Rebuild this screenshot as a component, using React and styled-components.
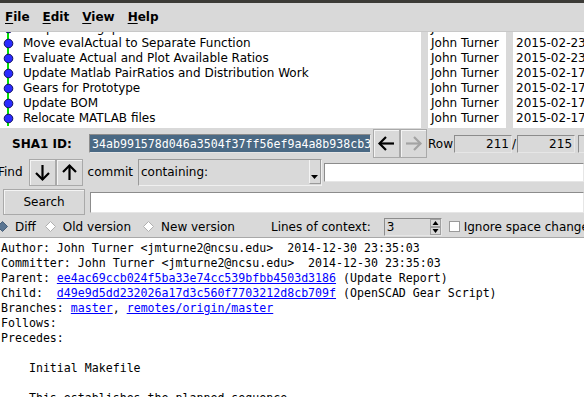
import styled, { createGlobalStyle } from "styled-components";

const GlobalStyle = createGlobalStyle`
  html, body {
    margin: 0;
    padding: 0;
    background: #d9d9d9;
    overflow: hidden;
  }
  body {
    font-family: "DejaVu Sans", sans-serif;
    font-size: 12px;
    color: #000;
  }
`;

const Window = styled.div`
  width: 584px;
  height: 397px;
  display: flex;
  flex-direction: column;
  overflow: hidden;
  background: #d9d9d9;
`;

const TopStrip = styled.div`
  flex: none;
  height: 3px;
  background: #3c3b37;
`;

const MenuBar = styled.div`
  flex: none;
  height: 28px;
  display: flex;
  align-items: center;
  gap: 13px;
  padding-left: 5px;
  font-weight: bold;
  border-bottom: 1px solid #c8c8c8;

  u {
    text-decoration-thickness: 1px;
    text-underline-offset: 2px;
  }
`;

const Panes = styled.div`
  flex: none;
  height: 96px;
  display: flex;
  gap: 7px;
`;

const Pane = styled.div`
  flex: ${(p) => (p.$w ? "none" : "1")};
  width: ${(p) => (p.$w ? `${p.$w}px` : "auto")};
  background: #fff;
  overflow: hidden;
`;

const Rows = styled.div`
  margin-top: -11px;
`;

const Row = styled.div`
  height: 15px;
  line-height: 15px;
  display: flex;
  align-items: center;
  white-space: nowrap;
  padding-left: ${(p) => p.$pad || 0}px;
`;

const Graph = styled.svg`
  flex: none;
  width: 23px;
  height: 15px;
`;

const ToolRow = styled.div`
  flex: none;
  height: ${(p) => p.$h}px;
  margin-top: ${(p) => p.$mt || 0}px;
  display: flex;
  align-items: center;
  white-space: nowrap;
`;

const Label = styled.span`
  flex: none;
  font-weight: ${(p) => (p.$bold ? "bold" : "normal")};
  margin-left: ${(p) => p.$ml || 0}px;
  width: ${(p) => (p.$w ? `${p.$w}px` : "auto")};
`;

const Entry = styled.div`
  flex: ${(p) => (p.$grow ? "1" : "none")};
  box-sizing: border-box;
  width: ${(p) => (p.$w ? `${p.$w}px` : "auto")};
  height: ${(p) => p.$h || 19}px;
  margin-left: ${(p) => p.$ml || 0}px;
  border: 1px solid;
  border-color: #8c8c8c #e6e6e6 #e6e6e6 #8c8c8c;
  background: ${(p) => (p.$sel ? "#4a6984" : p.$ro ? "#d9d9d9" : "#fff")};
  color: ${(p) => (p.$sel ? "#fff" : "#000")};
  font-family: ${(p) => (p.$mono ? '"DejaVu Sans Mono", monospace' : "inherit")};
  font-size: ${(p) => (p.$mono ? "11.6px" : "12px")};
  display: flex;
  align-items: center;
  justify-content: ${(p) => (p.$right ? "flex-end" : "flex-start")};
  padding: 0 2px;
  overflow: hidden;
  white-space: nowrap;
`;

const ArrowButton = styled.div`
  flex: none;
  box-sizing: border-box;
  width: 27px;
  height: ${(p) => p.$h || 29}px;
  margin-left: ${(p) => p.$ml || 0}px;
  border: 1px solid #a9a9a9;
  box-shadow: inset 1px 1px 0 #f4f4f4;
  display: flex;
  align-items: center;
  justify-content: center;
  color: ${(p) => (p.$disabled ? "#a3a3a3" : "#000")};
`;

const Button = styled.div`
  flex: none;
  box-sizing: border-box;
  width: 82px;
  height: 26px;
  margin-left: 3px;
  border: 1px solid #a9a9a9;
  box-shadow: inset 1px 1px 0 #f4f4f4;
  display: flex;
  align-items: center;
  justify-content: center;
`;

const Combo = styled.div`
  flex: none;
  box-sizing: border-box;
  width: 184px;
  height: 27px;
  margin-left: 5px;
  border: 1px solid;
  border-color: #9a9a9a #f0f0f0 #f0f0f0 #9a9a9a;
  display: flex;
  align-items: center;
  padding-left: 2px;
  position: relative;
`;

const ComboButton = styled.div`
  position: absolute;
  right: 0;
  top: 0;
  bottom: 1px;
  width: 12px;
  box-sizing: border-box;
  border-left: 1px solid #f4f4f4;
  border-right: 1px solid #9a9a9a;
  border-bottom: 1px solid #9a9a9a;
  display: flex;
  align-items: flex-end;
  justify-content: center;
  padding-bottom: 4px;
`;

const Radio = styled.span`
  flex: none;
  display: flex;
  align-items: center;
  margin-left: ${(p) => p.$ml || 0}px;

  svg {
    margin-right: ${(p) => p.$gap || 7}px;
  }
`;

const Spin = styled.div`
  flex: none;
  box-sizing: border-box;
  width: 58px;
  height: 18px;
  margin-left: 13px;
  border: 1px solid;
  border-color: #8c8c8c #e6e6e6 #e6e6e6 #8c8c8c;
  display: flex;
  align-items: center;
  padding-left: 2px;
  position: relative;
`;

const SpinArrows = styled.svg`
  position: absolute;
  right: 0;
  top: 0;
`;

const CheckBox = styled.span`
  flex: none;
  box-sizing: border-box;
  width: 11px;
  height: 11px;
  margin: 0 4px 0 7px;
  border: 1px solid #9a9a9a;
  background: #fff;
`;

const TextPane = styled.div`
  flex: 1;
  background: #fff;
  border-top: 1px solid #a8a8a8;
  padding: 3px 0 0 1px;
  font-family: "DejaVu Sans Mono", monospace;
  font-size: 11.6px;
  line-height: 15px;
  white-space: pre;
  overflow: hidden;

  a {
    color: #0000ff;
    text-decoration: underline;
  }
`;

const commits = [
  { msg: "Adapt Ratio gap", date: "2015-02-23 18:02" },
  { msg: "Move evalActual to Separate Function", date: "2015-02-23 17:41" },
  { msg: "Evaluate Actual and Plot Available Ratios", date: "2015-02-23 12:10" },
  { msg: "Update Matlab PairRatios and Distribution Work", date: "2015-02-17 21:33" },
  { msg: "Gears for Prototype", date: "2015-02-17 20:05" },
  { msg: "Update BOM", date: "2015-02-17 19:48" },
  { msg: "Relocate MATLAB files", date: "2015-02-17 19:20" },
];

function Node() {
  return (
    <Graph viewBox="0 0 23 15">
      <rect x="7" y="0" width="2" height="15" fill="#00e000" />
      <circle cx="8.5" cy="7.5" r="4.3" fill="#2b2bff" stroke="#10105a" strokeWidth="1" />
    </Graph>
  );
}

function Arrow({ dir }) {
  const rot = { left: 0, right: 180, up: 90, down: 270 }[dir];
  return (
    <svg width="19" height="19" viewBox="0 0 19 19">
      <g transform={`rotate(${rot} 9.5 9.5)`} fill="none" stroke="currentColor" strokeWidth="2.2">
        <path d="M2.5 9.5 H17" />
        <path d="M9 3 L2.5 9.5 L9 16" />
      </g>
    </svg>
  );
}

function Diamond({ on }) {
  return (
    <svg width="11" height="11" viewBox="0 0 11 11">
      <polygon
        points="5.5,0.5 10.5,5.5 5.5,10.5 0.5,5.5"
        fill={on ? "#5a7592" : "#fff"}
        stroke={on ? "#4a6078" : "#b0b0b0"}
        strokeWidth="1"
      />
    </svg>
  );
}

export default function App() {
  return (
    <Window>
      <GlobalStyle />
      <TopStrip />
      <MenuBar>
        <span><u>F</u>ile</span>
        <span><u>E</u>dit</span>
        <span><u>V</u>iew</span>
        <span><u>H</u>elp</span>
      </MenuBar>

      <Panes>
        <Pane $w={421}>
          <Rows>
            {commits.map((c) => (
              <Row key={c.msg}>
                <Node />
                {c.msg}
              </Row>
            ))}
          </Rows>
        </Pane>
        <Pane $w={78}>
          <Rows>
            {commits.map((c) => (
              <Row key={c.msg} $pad={3}>John Turner</Row>
            ))}
          </Rows>
        </Pane>
        <Pane>
          <Rows>
            {commits.map((c) => (
              <Row key={c.msg} $pad={3}>{c.date}</Row>
            ))}
          </Rows>
        </Pane>
      </Panes>

      <ToolRow $h={29} $mt={1}>
        <Label $bold $ml={12} $w={77}>SHA1 ID:</Label>
        <Entry $w={282} $mono $sel>34ab991578d046a3504f37ff56ef9a4a8b938cb3</Entry>
        <ArrowButton $ml={2}><Arrow dir="left" /></ArrowButton>
        <ArrowButton $disabled><Arrow dir="right" /></ArrowButton>
        <Label $ml={1}>Row</Label>
        <Entry $w={58} $h={18} $ml={1} $ro $right>211</Entry>
        <Label>/</Label>
        <Entry $w={58} $h={18} $ml={1} $ro $right>215</Entry>
        <Entry $w={20} $h={18} $ml={3} $ro />
      </ToolRow>

      <ToolRow $h={28}>
        <Label $ml={-2}>Find</Label>
        <ArrowButton $ml={6} $h={27}><Arrow dir="down" /></ArrowButton>
        <ArrowButton $h={27}><Arrow dir="up" /></ArrowButton>
        <Label $ml={5}>commit</Label>
        <Combo>
          containing:
          <ComboButton>
            <svg width="7" height="4" viewBox="0 0 7 4">
              <polygon points="0,0 7,0 3.5,4" fill="#000" />
            </svg>
          </ComboButton>
        </Combo>
        <Entry $grow $ml={2} $h={19} />
      </ToolRow>

      <ToolRow $h={28} $mt={2}>
        <Button>Search</Button>
        <Entry $grow $ml={5} $h={21} />
      </ToolRow>

      <ToolRow $h={21}>
        <Radio $ml={-3} $gap={7}><Diamond on />Diff</Radio>
        <Radio $ml={9} $gap={7}><Diamond />Old version</Radio>
        <Radio $ml={12} $gap={7}><Diamond />New version</Radio>
        <Label $ml={36}>Lines of context:</Label>
        <Spin>
          3
          <SpinArrows width="11" height="16" viewBox="0 0 11 16">
            <rect x="0.5" y="0.5" width="10" height="7" fill="#d9d9d9" stroke="#a0a0a0" />
            <rect x="0.5" y="8.5" width="10" height="7" fill="#d9d9d9" stroke="#a0a0a0" />
            <polygon points="5.5,2 8.5,6 2.5,6" fill="#000" />
            <polygon points="2.5,10 8.5,10 5.5,14" fill="#000" />
          </SpinArrows>
        </Spin>
        <CheckBox />
        <Label>Ignore space change</Label>
      </ToolRow>

      <TextPane>
        {"Author: John Turner <jmturne2@ncsu.edu>  2014-12-30 23:35:03\n"}
        {"Committer: John Turner <jmturne2@ncsu.edu>  2014-12-30 23:35:03\n"}
        {"Parent: "}<a>ee4ac69ccb024f5ba33e74cc539bfbb4503d3186</a>{" (Update Report)\n"}
        {"Child:  "}<a>d49e9d5dd232026a17d3c560f7703212d8cb709f</a>{" (OpenSCAD Gear Script)\n"}
        {"Branches: "}<a>master</a>{", "}<a>remotes/origin/master</a>{"\n"}
        {"Follows:\n"}
        {"Precedes:\n"}
        {"\n"}
        {"    Initial Makefile\n"}
        {"\n"}
        {"    This establishes the planned sequence\n"}
      </TextPane>
    </Window>
  );
}
